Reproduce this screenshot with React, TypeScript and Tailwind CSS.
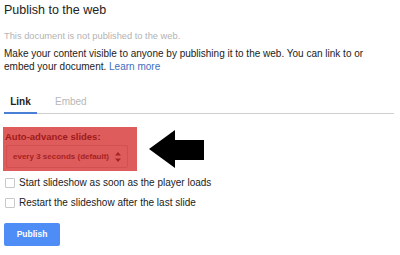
import React from "react";

function Arrow() {
  return (
    <svg width="56" height="39" viewBox="0 0 56 39" className="block">
      <polygon points="0,19 26,0 26,10 55,10 55,30 26,30 26,38" fill="#000" />
    </svg>
  );
}

function SelectArrows() {
  return (
    <svg width="6" height="10" viewBox="0 0 6 10" className="block">
      <polygon points="3,0 6,3.5 0,3.5" fill="#a32424" />
      <polygon points="0,6.5 6,6.5 3,10" fill="#a32424" />
    </svg>
  );
}

function Checkbox({ label }: { label: string }) {
  return (
    <label className="flex items-center gap-[4px] h-[10px]">
      <span className="w-[10px] h-[10px] border border-[#c8c8c8] rounded-[1px] bg-white shrink-0" />
      <span className="text-[10px] leading-none text-[#222]">{label}</span>
    </label>
  );
}

export default function App() {
  return (
    <div
      className="w-[400px] h-[255px] bg-white px-[4px] overflow-hidden"
      style={{ fontFamily: '"Liberation Sans", Arial, sans-serif' }}
    >
      <h1 className="pt-[3px] text-[12.5px] leading-[15px] text-[#222]">
        Publish to the web
      </h1>

      <p className="mt-[12px] text-[9.3px] leading-[12px] text-[#b3b3b3]">
        This document is not published to the web.
      </p>

      <p className="mt-[5px] w-[372px] text-[10px] leading-[13px] text-[#222]">
        Make your content visible to anyone by publishing it to the web. You can
        link to or embed your document.{" "}
        <span className="text-[#3b6dbf]">Learn more</span>
      </p>

      {/* Tabs */}
      <div className="mt-[23px] flex border-b border-[#cfcfcf] w-[390px]">
        <div className="w-[33px] pb-[4px] border-b-2 border-[#4a7fd8] -mb-[1px] text-center text-[10px] leading-[12px] font-bold text-[#222]">
          Link
        </div>
        <div className="ml-[18px] text-[10px] leading-[12px] text-[#b8b8b8]">
          Embed
        </div>
      </div>

      {/* Auto-advance */}
      <div className="mt-[13px] flex items-start">
        <div className="w-[134px] h-[44px] -ml-[1px] bg-[#df5c5c] pt-[4px] pl-[2px]">
          <div className="text-[9.5px] leading-[12px] font-bold text-[#9e1a1a]">
            Auto-advance slides:
          </div>
          <div className="mt-[2px] ml-[1px] w-[122px] h-[23px] border border-[#d35050] rounded-[2px] flex items-center pl-[6px] pr-[6px] text-[8px] font-bold text-[#a82222] whitespace-nowrap">
            every 3 seconds (default)
            <span className="ml-auto">
              <SelectArrows />
            </span>
          </div>
        </div>
        <div className="ml-[12px] mt-[3px]">
          <Arrow />
        </div>
      </div>

      <div className="mt-[7px] flex flex-col gap-[10px] pl-[1px]">
        <Checkbox label="Start slideshow as soon as the player loads" />
        <Checkbox label="Restart the slideshow after the last slide" />
      </div>

      <button className="mt-[15px] w-[56px] h-[23px] rounded-[2px] bg-[#4d8df5] text-white text-[8.5px] font-bold">
        Publish
      </button>
    </div>
  );
}
